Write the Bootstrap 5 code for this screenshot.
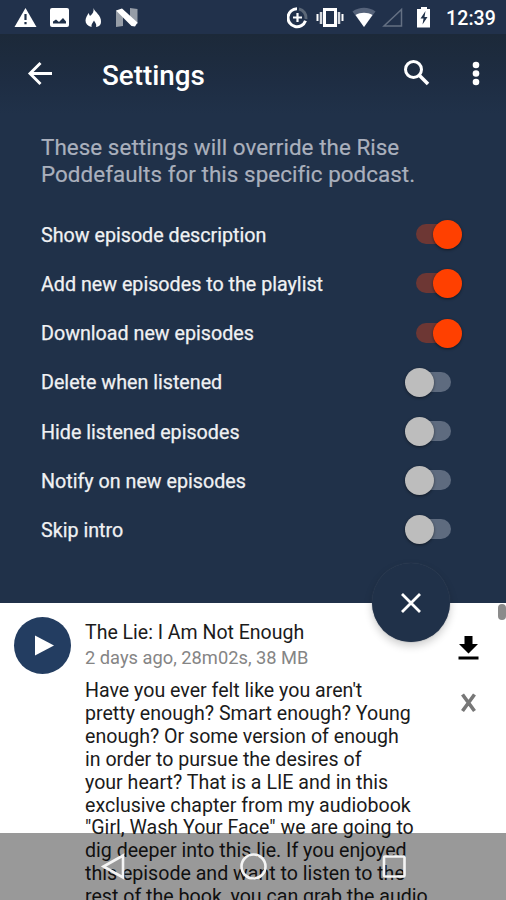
<!DOCTYPE html>
<html lang="en">
<head>
<meta charset="utf-8">
<meta name="viewport" content="width=device-width, initial-scale=1">
<title>Settings</title>
<link href="https://cdn.jsdelivr.net/npm/bootstrap@5.3.0/dist/css/bootstrap.min.css" rel="stylesheet">
<style>
body{font-family:Roboto,"Liberation Sans",sans-serif;height:900px;background:#fff;color:#1b1b1b}
svg{display:block;flex:none}
.screen{height:900px}
.panel{height:603px;background:#203149;color:#f0f1f3}
.status{height:34px;background:#21314b;padding:0 10px 0 14px}
.clock{font-size:19.5px;font-weight:500;line-height:32px;padding-top:3px;letter-spacing:.1px}
.toolbar{height:80px;padding:0 18px 0 24px;background:linear-gradient(#1c2939,#1e2d43 60%,#203149)}
.title{font-size:27.8px;font-weight:500;line-height:34px;margin-left:47px;padding-top:3px;color:#fff}
.intro{font-size:22.4px;line-height:26.6px;color:#aab0bd;padding:20px 0 0 41px;letter-spacing:.05px;-webkit-text-stroke:.2px}
.settings{padding:23px 44px 0 41px}
.setting{height:49.17px;font-size:19.7px;-webkit-text-stroke:.25px}
.setting>span{padding-top:2px}
.toggle{width:57px;height:30px;padding:0 11px;margin-top:-1px}
.track{height:20px;border-radius:10px;background:#5e6b7f}
.knob{top:1px;left:0;width:29px;height:29px;background:#bdbdbd;box-shadow:0 1px 3px #0007}
.on .track{background:#6d3734}
.on .knob{left:28px;background:#ff4000}
.close-fab{left:372px;top:563px;width:78px;height:79px;background:#203149;box-shadow:0 4px 8px #0003,0 0 1px #4b586b}
.episode{padding:14px 0 0 14px}
.play{width:57px;height:57px;background:#233d61}
.words{margin-left:14px;width:352px}
.ep-title{font-size:19.5px;line-height:30px;padding-top:1px}
.meta{font-size:18.3px;line-height:22px;margin-top:-1px;color:#858585}
.notes{font-size:19.6px;line-height:22.9px;padding-top:11px;white-space:nowrap}
.actions{padding-top:18px;margin-left:20px;gap:30px}
.thumb{right:0;top:604px;width:8px;height:16px;border-radius:4px;background:#8b8b8b}
.navkeys{height:67px;background:rgba(0,0,0,.4)}
</style>
<script src="https://cdn.jsdelivr.net/npm/bootstrap@5.3.0/dist/js/bootstrap.bundle.min.js"></script>
</head>
<body class="m-0 overflow-hidden">
<div class="screen position-relative overflow-hidden">
<header class="panel">
  <div class="status d-flex align-items-center">
    <svg width="130" height="34" fill="#fff"><path d="M11.500 8 22.500 27H.5Z"/><path d="M11.500 14v6M11.500 22v2.200" stroke="#203149" stroke-width="2.200"/><rect x="36" y="8" width="19" height="19" rx="2"/><path d="M39 23.500v-2l3-2 3 2.500 4-4 3 3.500v2Z" fill="#203149"/><path d="M79.500 8c1 4 8 7 7.500 14 0 3-2 4.500-5 5 1-3-1-4.500-2-6.500-1 2-3 3.500-2.500 6.500-4-1-6-3.500-6-6.500 0-3 2-5 3-7.500l1.500 3C79 14 80 11 79.500 8Z"/><path d="M102 10.500 109 14v12l-7 1ZM116 8l7.500 1v15l-7.500-3Z" fill="#969da7"/><path d="M102 10.500 108 8.500 123.500 22.500 121 26.500 117.500 26Z"/></svg>
    <svg class="ms-auto me-3" width="143" height="34" fill="#fff"><g fill="none" stroke="#fff"><path d="M10 8.700a9 9 0 1 0 8.500 12" stroke-width="3"/><path d="M12 9a9 9 0 0 1 7 10" stroke="#5c6878" stroke-width="3"/><path d="M10.500 13v9M6 17.500h9" stroke-width="2.200"/><rect x="37.500" y="9.500" width="11" height="16" stroke-width="3"/><path d="M34 12v12M52 12v12" stroke-width="2.500" stroke="#d5d9df"/><path d="M30.500 14v7M55.500 14v7" stroke-width="2"/></g><path d="M65.500 11.500c7-5 16-5 23 0L77 27Z" fill="#56637a"/><path d="M68.500 15c5-3 12-3 17 0L77 27Z"/><path d="M97 26h17.500V9.500Z" fill="none" stroke="#647083" stroke-width="1.500"/><path d="M130 9h4V7h6v2h4v18.500h-14Z"/><path d="m138.500 11-5 7.500h3l-1 6 5-7.500h-3Z" fill="#203149"/></svg>
    <span class="clock text-white">12:39</span>
  </div>
  <nav class="toolbar d-flex align-items-center">
    <svg width="31" height="30" fill="none" stroke="#fff" stroke-width="2.900"><path d="M28 14.500H6M16.500 4 6 14.500 16.500 25"/></svg>
    <span class="title">Settings</span>
    <svg class="ms-auto" width="30" height="32" fill="none" stroke="#fff"><circle cx="11.500" cy="11.500" r="8" stroke-width="3"/><path d="m17 17 9 9" stroke-width="3.600"/></svg>
    <svg class="ms-2" width="48" height="32" fill="#fff"><circle cx="36" cy="7" r="3.300"/><circle cx="36" cy="15.500" r="3.300"/><circle cx="36" cy="24" r="3.300"/></svg>
  </nav>
  <p class="intro m-0">These settings will override the Rise<br>Poddefaults for this specific podcast.</p>
  <div class="settings">
    <div class="setting on d-flex align-items-center justify-content-between"><span>Show episode description</span><div class="toggle d-flex align-items-center position-relative"><div class="track w-100"></div><div class="knob rounded-circle position-absolute"></div></div></div>
    <div class="setting on d-flex align-items-center justify-content-between"><span>Add new episodes to the playlist</span><div class="toggle d-flex align-items-center position-relative"><div class="track w-100"></div><div class="knob rounded-circle position-absolute"></div></div></div>
    <div class="setting on d-flex align-items-center justify-content-between"><span>Download new episodes</span><div class="toggle d-flex align-items-center position-relative"><div class="track w-100"></div><div class="knob rounded-circle position-absolute"></div></div></div>
    <div class="setting d-flex align-items-center justify-content-between"><span>Delete when listened</span><div class="toggle d-flex align-items-center position-relative"><div class="track w-100"></div><div class="knob rounded-circle position-absolute"></div></div></div>
    <div class="setting d-flex align-items-center justify-content-between"><span>Hide listened episodes</span><div class="toggle d-flex align-items-center position-relative"><div class="track w-100"></div><div class="knob rounded-circle position-absolute"></div></div></div>
    <div class="setting d-flex align-items-center justify-content-between"><span>Notify on new episodes</span><div class="toggle d-flex align-items-center position-relative"><div class="track w-100"></div><div class="knob rounded-circle position-absolute"></div></div></div>
    <div class="setting d-flex align-items-center justify-content-between"><span>Skip intro</span><div class="toggle d-flex align-items-center position-relative"><div class="track w-100"></div><div class="knob rounded-circle position-absolute"></div></div></div>
  </div>
</header>
<main class="episode d-flex align-items-start">
  <div class="play rounded-circle d-flex flex-shrink-0"><svg width="57" height="57"><path d="M21 18.500v20l19-10Z" fill="#fff"/></svg></div>
  <article class="words flex-shrink-0">
    <div class="ep-title">The Lie: I Am Not Enough</div>
    <div class="meta">2 days ago, 28m02s, 38 MB</div>
    <div class="notes">Have you ever felt like you aren't<br>pretty enough? Smart enough? Young<br>enough? Or some version of enough<br>in order to pursue the desires of<br>your heart? That is a LIE and in this<br>exclusive chapter from my audiobook<br>"Girl, Wash Your Face" we are going to<br>dig deeper into this lie. If you enjoyed<br>this episode and want to listen to the<br>rest of the book, you can grab the audio</div>
  </article>
  <div class="actions d-flex flex-column">
    <svg width="22" height="26"><path d="M7.500 1h8v8H21L11.500 18.500 2 9h5.500ZM1.500 21.500h20v3h-20Z"/></svg>
    <svg width="22" height="24" fill="none" stroke="#777" stroke-width="3.600"><path d="m5.500 3.500 12 16.500M17.500 3.500 5.500 20"/></svg>
  </div>
</main>
<button type="button" aria-label="Close" class="close-fab position-absolute rounded-circle border-0 p-0 d-flex align-items-center justify-content-center"><svg width="24" height="24" fill="none" stroke="#fff" stroke-width="2.800"><path d="m3 3 18 18M21 3 3 21"/></svg></button>
<div class="thumb position-absolute"></div>
<nav class="navkeys position-absolute bottom-0 start-0 w-100">
  <svg width="506" height="67" fill="none" stroke="#f4f4f4" stroke-width="2.600"><path d="M103.500 33.500 123 22.500v22Z"/><circle cx="253.500" cy="33.500" r="12"/><rect x="384" y="23.500" width="20.500" height="20" rx="1"/></svg>
</nav>
</div>
</body>
</html>
